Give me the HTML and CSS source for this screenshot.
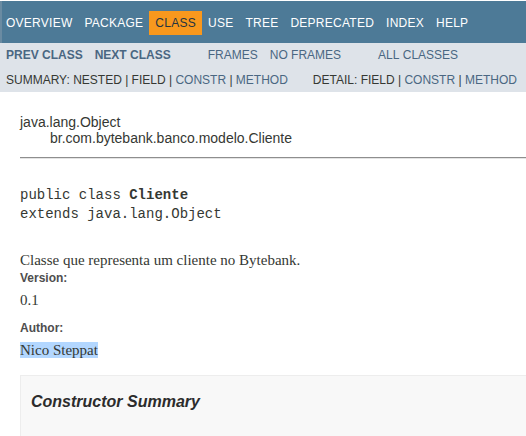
FILE: index.html
```html
<!DOCTYPE html>
<html lang="pt">
<head>
<meta charset="utf-8">
<title>Cliente</title>
<link rel="stylesheet" href="styles.css">
</head>
<body>
<div class="top-nav">
  <ul class="nav-list">
    <li>Overview</li>
    <li>Package</li>
    <li class="current">Class</li>
    <li>Use</li>
    <li>Tree</li>
    <li>Deprecated</li>
    <li>Index</li>
    <li>Help</li>
  </ul>
</div>
<div class="sub-nav">
  <div class="sub-row first">
    <ul class="sub-list">
      <li class="link strong">Prev&nbsp;Class</li>
      <li class="link strong">Next&nbsp;Class</li>
    </ul>
    <ul class="sub-list">
      <li class="link">Frames</li>
      <li class="link">No&nbsp;Frames</li>
    </ul>
    <ul class="sub-list">
      <li class="link">All&nbsp;Classes</li>
    </ul>
  </div>
  <div class="sub-row second">
    <div class="sub-group">Summary:&nbsp;Nested&nbsp;|&nbsp;Field&nbsp;|&nbsp;<span class="link">Constr</span>&nbsp;|&nbsp;<span class="link">Method</span></div>
    <div class="sub-group">Detail:&nbsp;Field&nbsp;|&nbsp;<span class="link">Constr</span>&nbsp;|&nbsp;<span class="link">Method</span></div>
  </div>
</div>
<div class="content">
  <div class="inheritance">
    <div class="inherit-line">java.lang.Object</div>
    <div class="inherit-line nested">br.com.bytebank.banco.modelo.Cliente</div>
  </div>
  <hr class="rule">
  <pre class="signature">public class <b>Cliente</b>
extends java.lang.Object</pre>
  <div class="block">Classe que representa um cliente no Bytebank.</div>
  <dl class="tags">
    <dt>Version:</dt>
    <dd>0.1</dd>
    <dt>Author:</dt>
    <dd><span class="selected">Nico Steppat</span></dd>
  </dl>
  <div class="summary-box">
    <h3 class="summary-title">Constructor Summary</h3>
  </div>
</div>
</body>
</html>
```
FILE: styles.css
```css
html, body {
  overflow: hidden;
}
body {
  margin: 0;
  padding-top: 1px;
  background: #ffffff;
  color: #353833;
  font-family: "Liberation Sans", Arial, sans-serif;
  font-size: 14px;
  line-height: 16px;
}
ul {
  margin: 0;
  padding: 0;
  list-style: none;
}
.top-nav {
  background: #4d7a97;
  height: 42px;
  box-sizing: border-box;
  padding-top: 10px;
  font-size: 12px;
  line-height: 14px;
  border-left: 2px solid #6a8ba2;
}
.nav-list {
  display: flex;
  margin-left: -2px;
}
.nav-list li {
  padding: 5px 6px;
  color: #ffffff;
  text-transform: uppercase;
  letter-spacing: 0.25px;
}
.nav-list li.current {
  background: #f8981d;
  color: #253441;
}
.sub-nav {
  background: #dee3e9;
  height: 49px;
  box-sizing: border-box;
  padding-top: 5px;
  font-size: 12px;
  line-height: 14px;
}
.sub-row {
  display: flex;
  text-transform: uppercase;
  white-space: nowrap;
}
.sub-row.second {
  margin-top: 11px;
  padding-left: 6px;
}
.sub-list {
  display: flex;
  margin-right: 25px;
}
.sub-list li {
  padding: 0 6px;
}
.sub-group {
  margin-right: 25px;
}
.link {
  color: #4a6782;
}
.strong {
  font-weight: bold;
}
.content {
  padding-left: 20px;
}
.inheritance {
  padding-top: 22px;
}
.inherit-line {
  font-size: 14px;
  line-height: 16px;
}
.inherit-line.nested {
  padding-left: 30px;
}
.rule {
  margin: 11px 0 0;
  border: 0;
  border-top: 1px solid #8e8e8e;
  border-bottom: 1px solid #e4e4e4;
  height: 0;
}
.signature {
  margin: 27px 0 0;
  font-family: "Liberation Mono", "Courier New", monospace;
  font-size: 14px;
  line-height: 19px;
  color: #353833;
}
.block {
  margin-top: 27px;
  font-family: "Liberation Serif", "Times New Roman", serif;
  font-size: 15px;
  line-height: 18px;
  color: #353833;
}
.tags {
  margin: 2px 0 0;
}
.tags dt {
  font-size: 12px;
  font-weight: bold;
  line-height: 14px;
  color: #4e4e4e;
}
.tags dt + dd + dt {
  margin-top: 12px;
}
.tags dd {
  margin: 6px 0 0;
  font-family: "Liberation Serif", "Times New Roman", serif;
  font-size: 15px;
  line-height: 18px;
  color: #353833;
}
.selected {
  background: #b3d7ff;
}
.summary-box {
  margin: 16px -40px 0 0;
  padding: 0 20px 40px 10px;
  background: #f8f8f8;
  border: 1px solid #ededed;
}
.summary-title {
  margin: 16px 0 0;
  font-size: 16px;
  line-height: 20px;
  font-style: italic;
  font-weight: bold;
  color: #2c2c2c;
}
```
